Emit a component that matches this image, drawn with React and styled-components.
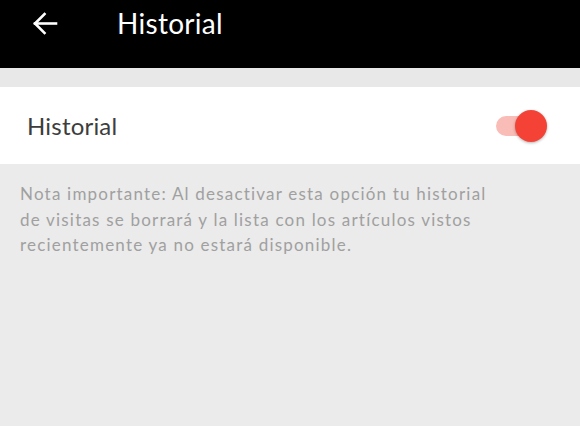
import React, { useState } from "react";
import styled, { createGlobalStyle } from "styled-components";

const Global = createGlobalStyle`
  html, body { margin: 0; padding: 0; background: #ebebeb; }
  body { font-family: Lato, "Noto Sans", sans-serif; }
`;

const Page = styled.div`
  width: 580px;
  height: 426px;
  background: #ebebeb;
  overflow: hidden;
`;

const Header = styled.header`
  height: 68px;
  background: #000;
  display: flex;
  align-items: flex-start;
  padding-top: 8px;
  box-sizing: border-box;
  box-shadow: 0 1px 3px rgba(0,0,0,0.25);
`;

const BackButton = styled.button`
  width: 32px;
  height: 30px;
  margin-left: 29px;
  padding: 0;
  border: 0;
  background: transparent;
  display: flex;
  align-items: center;
  justify-content: center;
`;

const Title = styled.h1`
  margin: 0 0 0 56px;
  color: #fff;
  font-size: 28px;
  font-weight: 400;
  line-height: 30px;
  letter-spacing: 0.3px;
`;

const Spacer = styled.div`
  height: 19px;
  background: #e8e8e8;
`;

const Row = styled.div`
  height: 77px;
  background: #fff;
  display: flex;
  align-items: center;
  justify-content: space-between;
  padding: 0 32px 0 27px;
`;

const RowLabel = styled.span`
  font-size: 24px;
  color: #3d3d3d;
  letter-spacing: 0.2px;
`;

const Toggle = styled.button`
  position: relative;
  width: 52px;
  height: 32px;
  padding: 0;
  border: 0;
  background: transparent;
`;

const Track = styled.span`
  position: absolute;
  left: 0;
  top: 6px;
  width: 42px;
  height: 20px;
  border-radius: 10px;
  background: ${p => (p.$on ? "#f9bcb6" : "#c8c8c8")};
`;

const Knob = styled.span`
  position: absolute;
  top: 0;
  left: ${p => (p.$on ? "19px" : "0")};
  width: 32px;
  height: 32px;
  border-radius: 50%;
  background: ${p => (p.$on ? "#f44336" : "#fafafa")};
  box-shadow: 0 1px 3px rgba(0,0,0,0.3);
`;

const Note = styled.p`
  margin: 0;
  padding: 17px 0 0 20px;
  width: 480px;
  font-size: 17px;
  line-height: 25.5px;
  color: #a0a0a0;
  letter-spacing: 1.2px;
`;

export default function App() {
  const [on, setOn] = useState(true);
  return (
    <Page>
      <Global />
      <Header>
        <BackButton aria-label="Volver">
          <svg width="27" height="27" viewBox="0 0 27 27" fill="none" stroke="#fff" strokeWidth="2.6" strokeLinecap="square">
            <path d="M3 13.5 H24" />
            <path d="M12.5 4 L3 13.5 L12.5 23" />
          </svg>
        </BackButton>
        <Title>Historial</Title>
      </Header>
      <Spacer />
      <Row>
        <RowLabel>Historial</RowLabel>
        <Toggle onClick={() => setOn(!on)} aria-label="Historial">
          <Track $on={on} />
          <Knob $on={on} />
        </Toggle>
      </Row>
      <Note>
        Nota importante: Al desactivar esta opción tu historial de visitas se borrará y la lista con los artículos vistos recientemente ya no estará disponible.
      </Note>
    </Page>
  );
}
